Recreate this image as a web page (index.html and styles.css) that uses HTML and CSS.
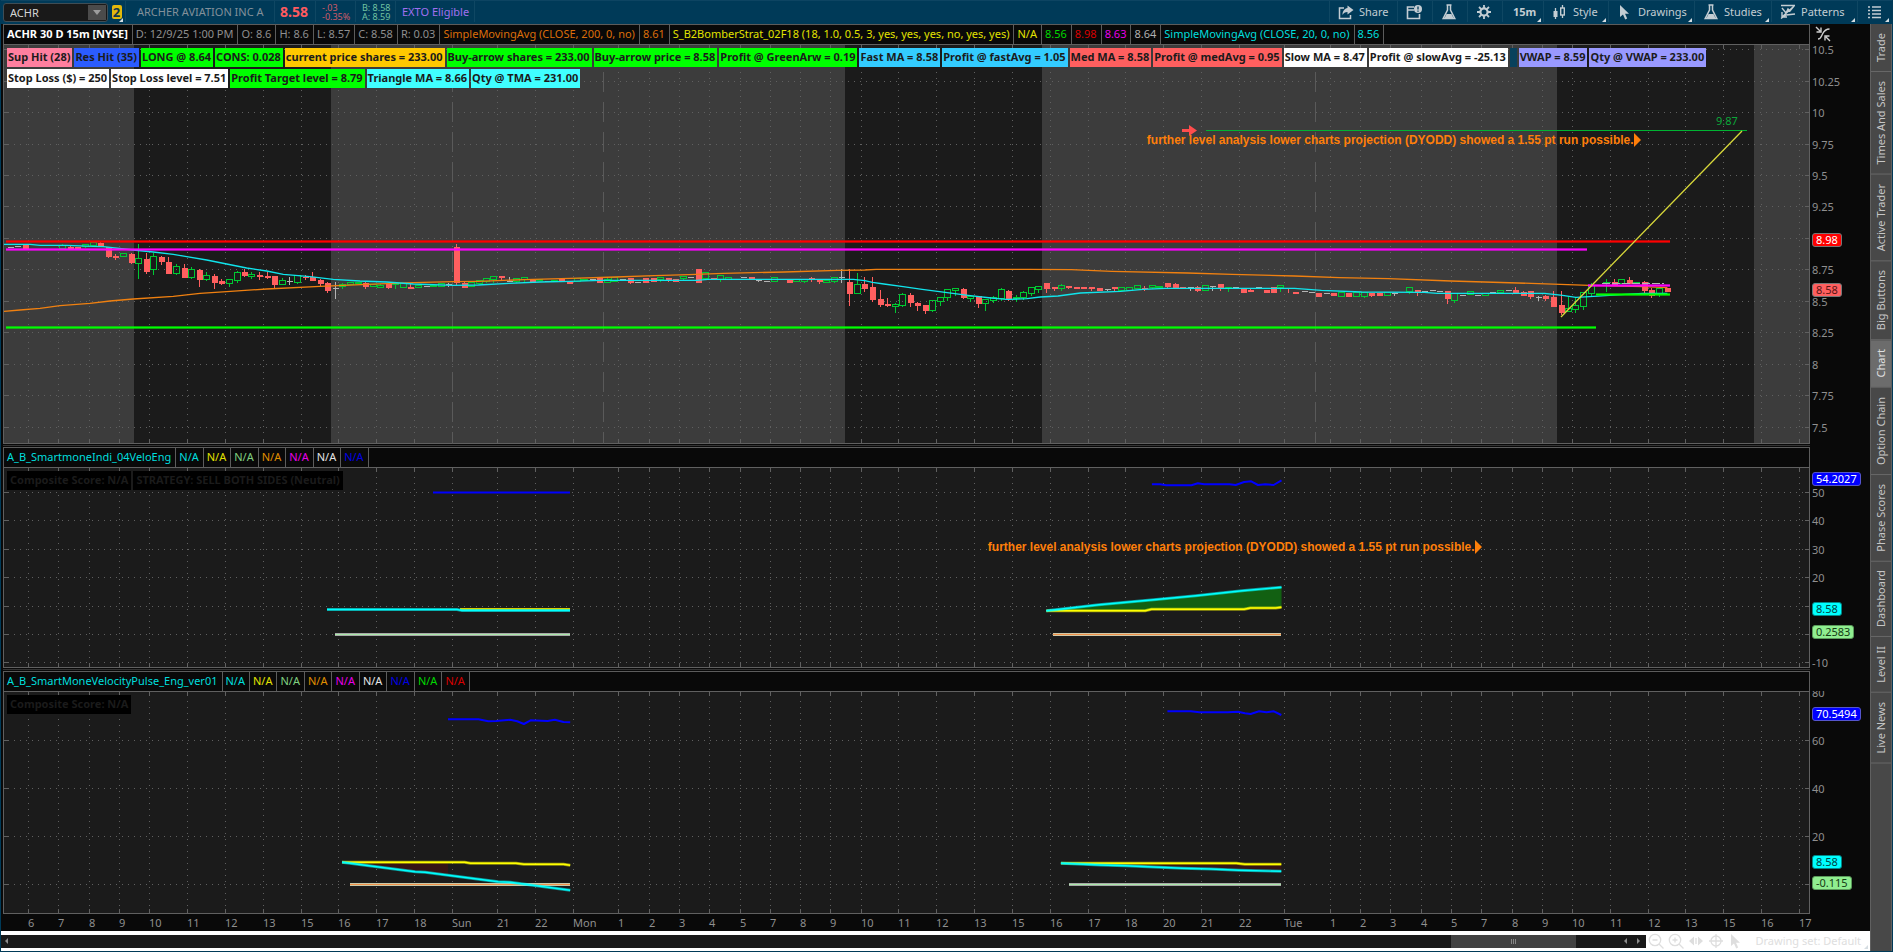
FILE: index.html
```html
<!DOCTYPE html>
<html lang="en">
<head>
<meta charset="utf-8">
<title>ACHR 30 D 15m</title>
<link rel="stylesheet" href="styles.css">
</head>
<body>
<div class="app">
  <header class="toolbar">
    <div class="symbol-box">
      <select class="symbol-select" aria-label="Symbol"><option>ACHR</option></select>
      <span class="symbol-arrow"></span>
    </div>
    <button class="link-badge corner" aria-label="Link group 2"><span>2</span></button>
    <div class="cell company">ARCHER AVIATION INC A</div>
    <div class="cell last">8.58</div>
    <div class="cell stack down"><span>-.03</span><span>-0.35%</span></div>
    <div class="cell stack quote"><span>B: 8.58</span><span>A: 8.59</span></div>
    <div class="cell exto">EXTO Eligible</div>
    <div class="spacer"></div>
    <button class="tool share"><svg class="icon" viewBox="0 0 16 16"><path d="M6 4H1.500v10.500h11V11" fill="none" stroke="currentColor" stroke-width="1.500"/><path d="M9.500 1.500 15.500 6l-6 4.500V8C7 8 5.500 9 4.500 11c0-4 2-6.500 5-7z" fill="currentColor"/></svg>Share</button>
    <button class="tool slim" aria-label="Calendar"><svg class="icon" viewBox="0 0 16 16"><path d="M8 3H1.500v11.500h12V10M1.500 6H8" fill="none" stroke="currentColor" stroke-width="1.600"/><circle cx="12" cy="5" r="4" fill="currentColor"/><path d="M12 2.500v3M12 6.500v1.200" stroke="#003a58" stroke-width="1.300"/></svg></button>
    <button class="tool slim" aria-label="Edit studies"><svg class="icon" viewBox="0 0 16 16"><use href="#flask"/></svg></button>
    <button class="tool slim" aria-label="Settings"><svg class="icon" viewBox="0 0 16 16"><circle cx="8" cy="8" r="3.600" fill="none" stroke="currentColor" stroke-width="2.200"/><path d="M8 1v3M8 12v3M1 8h3M12 8h3M3 3l2.200 2.200M10.800 10.800 13 13M13 3l-2.200 2.200M5.200 10.800 3 13" stroke="currentColor" stroke-width="1.800"/></svg></button>
    <button class="tool frame corner"><b>15m</b></button>
    <button class="tool style corner"><svg class="icon" viewBox="0 0 16 16"><path d="M3.500 4v11M10.500 1v3M10.500 11v3" stroke="currentColor" stroke-width="1.300"/><rect x="1.500" y="7" width="4" height="6" fill="currentColor"/><rect x="8.700" y="4" width="3.600" height="7" fill="none" stroke="currentColor" stroke-width="1.400"/></svg>Style</button>
    <button class="tool draw corner"><svg class="icon" viewBox="0 0 16 16"><path d="M3 1v12l3-2.500 2.200 5 2-.9-2.200-4.800H12z" fill="currentColor"/></svg>Drawings</button>
    <button class="tool studies corner"><svg class="icon" viewBox="0 0 16 16"><use href="#flask"/></svg>Studies</button>
    <button class="tool patterns corner"><svg class="icon" viewBox="0 0 16 16"><path d="M1 1.500h14M1 14.500 6 11l9-1M2 4l4 5 2-4 2 2 4-5M2 13 13 3M2 8v5h5" fill="none" stroke="currentColor" stroke-width="1.400"/></svg>Patterns</button>
    <button class="tool menu corner" aria-label="Menu"><svg class="icon" viewBox="0 0 16 16"><path d="M2 3h2M6 3h9M2 6.500h2M6 6.500h9M2 10h2M6 10h9M2 13.500h2M6 13.500h9" stroke="currentColor" stroke-width="1.500"/></svg></button>
  </header>

  <svg class="defs" aria-hidden="true"><defs><g id="flask"><path d="M5.500 1h5M6.500 1v5L2.200 14.500h11.600L9.500 6V1" fill="none" stroke="currentColor" stroke-width="1.500"/><path d="M5.500 10h5l2.300 4.500H3.200z" fill="currentColor"/></g></defs></svg>

  <div class="body">
    <main class="workspace">
      <section class="panel price">
        <div class="study-bar">
          <b class="white">ACHR 30 D 15m [NYSE]</b><span>D: 12/9/25 1:00 PM</span><span>O: 8.6</span><span>H: 8.6</span><span>L: 8.57</span><span>C: 8.58</span><span>R: 0.03</span><span class="orange">SimpleMovingAvg (CLOSE, 200, 0, no)</span><span class="orange">8.61</span><span class="yellow">S_B2BomberStrat_02F18 (18, 1.0, 0.5, 3, yes, yes, yes, no, yes, yes)</span><span class="yellow">N/A</span><span class="green">8.56</span><span class="red">8.98</span><span class="magenta">8.63</span><span class="silver">8.64</span><span class="cyan">SimpleMovingAvg (CLOSE, 20, 0, no)</span><span class="cyan">8.56</span>
        </div>
        <button class="collapse" aria-label="Fit chart"><svg class="icon" viewBox="0 0 16 16"><path d="M1 1l4 4M6 1.500V6H1.500M15 15l-4-4M10 14.500V10h4.500M3 13c3 0 3-2 4.500-5S11 3 14.500 3" fill="none" stroke="currentColor" stroke-width="1.400"/></svg></button>
        <div class="plot" id="plot-price">
          <div class="chips">
            <div class="chip-row"><span class="chip pink">Sup Hit (28)</span><span class="chip blue">Res Hit (35)</span><span class="chip lime">LONG @ 8.64</span><span class="chip lime">CONS: 0.028</span><span class="chip gold">current price shares = 233.00</span><span class="chip lime">Buy-arrow shares = 233.00</span><span class="chip lime">Buy-arrow price = 8.58</span><span class="chip lime">Profit @ GreenArw = 0.19</span><span class="chip sky">Fast MA = 8.58</span><span class="chip sky">Profit @ fastAvg = 1.05</span><span class="chip coral">Med MA = 8.58</span><span class="chip coral">Profit @ medAvg = 0.95</span><span class="chip plain">Slow MA = 8.47</span><span class="chip plain">Profit @ slowAvg = -25.13</span><span class="chip empty"></span><span class="chip violet">VWAP = 8.59</span><span class="chip violet">Qty @ VWAP = 233.00</span></div>
            <div class="chip-row"><span class="chip plain">Stop Loss ($) = 250</span><span class="chip plain">Stop Loss level = 7.51</span><span class="chip lime">Profit Target level = 8.79</span><span class="chip aqua">Triangle MA = 8.66</span><span class="chip aqua">Qty @ TMA = 231.00</span></div>
          </div>
          <span class="note note-top">further level analysis lower charts projection (DYODD) showed a 1.55 pt run possible.</span>
          <span class="target">9.87</span>
        </div>
        <div class="axis" id="axis-price"></div>
      </section>

      <section class="panel velo">
        <div class="study-bar"><span class="cyan">A_B_SmartmoneIndi_04VeloEng</span><span class="cyan">N/A</span><span class="yellow">N/A</span><span class="mint">N/A</span><span class="amber">N/A</span><span class="magenta">N/A</span><span class="light">N/A</span><span class="navy">N/A</span></div>
        <div class="plot" id="plot-velo">
          <div class="chips"><div class="chip-row"><span class="chip dark">Composite Score: N/A</span><span class="chip dark">STRATEGY: SELL BOTH SIDES (Neutral)</span></div></div>
          <span class="note note-mid">further level analysis lower charts projection (DYODD) showed a 1.55 pt run possible.</span>
        </div>
        <div class="axis" id="axis-velo"></div>
      </section>

      <section class="panel pulse">
        <div class="study-bar"><span class="cyan">A_B_SmartMoneVelocityPulse_Eng_ver01</span><span class="cyan">N/A</span><span class="yellow">N/A</span><span class="mint">N/A</span><span class="amber">N/A</span><span class="magenta">N/A</span><span class="light">N/A</span><span class="navy">N/A</span><span class="green">N/A</span><span class="red">N/A</span></div>
        <div class="plot" id="plot-pulse">
          <div class="chips"><div class="chip-row"><span class="chip dark">Composite Score: N/A</span></div></div>
        </div>
        <div class="axis" id="axis-pulse"></div>
      </section>

      <div class="time-axis" id="time-axis"></div>

      <footer class="bottom">
        <div class="scroller">
          <button class="arrow left" aria-label="Scroll to start"></button>
          <div class="track"><div class="thumb"><i></i><i></i><i></i></div></div>
          <button class="arrow left" aria-label="Scroll left"></button>
          <button class="arrow right" aria-label="Scroll right"></button>
        </div>
        <button class="mini" aria-label="Zoom out"><svg class="icon" viewBox="0 0 16 16"><circle cx="7" cy="7" r="5.700"/><path d="M11 11l4.500 4.500M4.500 7h5"/></svg></button>
        <button class="mini" aria-label="Zoom in"><svg class="icon" viewBox="0 0 16 16"><circle cx="7" cy="7" r="5.700"/><path d="M11 11l4.500 4.500M4.500 7h5M7 4.500v5"/></svg></button>
        <button class="mini" aria-label="Pan"><svg class="icon" viewBox="0 0 16 16"><path d="M6 3.500v9L1 8zM10 3.500v9L15 8z" class="solid"/><path d="M8 5v6"/></svg></button>
        <button class="mini" aria-label="Crosshair"><svg class="icon" viewBox="0 0 16 16"><circle cx="8" cy="8" r="5"/><path d="M8 1v14M1 8h14"/></svg></button>
        <button class="mini" aria-label="Pointer"><svg class="icon" viewBox="0 0 16 16"><path d="M3 1v12l3-2.500 2.200 5 2-.9-2.200-4.800H12z" class="solid"/></svg></button>
        <button class="drawing-set corner">Drawing set: Default</button>
      </footer>
    </main>

    <nav class="side">
      <button>Trade</button><button>Times And Sales</button><button>Active Trader</button><button>Big Buttons</button><button class="active">Chart</button><button>Option Chain</button><button>Phase Scores</button><button>Dashboard</button><button>Level II</button><button>Live News</button>
    </nav>
  </div>
</div>
<script src="chart.js"></script>
</body>
</html>
```

FILE: styles.css
```css
* { box-sizing: border-box; }
body {
  margin: 0;
  background: #003a58;
  font-family: "Noto Sans", "Open Sans", sans-serif;
  font-size: 11px;
  line-height: 16px;
  color: #8f8f8f;
}
button {
  border: 0;
  padding: 0;
  margin: 0;
  background: none;
  color: inherit;
  font: inherit;
  white-space: nowrap;
}
.app {
  display: flex;
  flex-direction: column;
  height: 100vh;
  padding: 0 1px 1px;
  overflow: hidden;
}
.defs { position: absolute; width: 0; height: 0; }
.icon { width: 16px; height: 16px; flex: none; }

.toolbar {
  display: flex;
  align-items: stretch;
  height: 24px;
  flex: none;
  padding: 0 1px 2px 2px;
  border-top: 1px solid #0d4462;
  color: #c3cdd3;
}
.symbol-box {
  position: relative;
  width: 105px;
  height: 19px;
  margin-top: 2px;
}
.symbol-select {
  width: 100%;
  height: 100%;
  padding: 0 6px;
  border: 1px solid #3f4d55;
  border-radius: 3px;
  background: #191919;
  color: #d5d5d5;
  font: inherit;
  appearance: none;
}
.symbol-arrow {
  position: absolute;
  top: 2px;
  right: 2px;
  width: 18px;
  height: 15px;
  background: #4b4b4b;
  pointer-events: none;
}
.symbol-arrow::after {
  content: "";
  position: absolute;
  left: 5px;
  top: 5px;
  border: 4px solid transparent;
  border-top: 5px solid #9d9d9d;
}
.link-badge { width: 17px; }
.link-badge span {
  display: block;
  width: 10px;
  height: 14px;
  margin: 0 auto;
  border-radius: 2px;
  background: #e3b80b;
  color: #10364c;
  font-weight: bold;
  font-size: 13px;
  line-height: 14px;
}
.corner { position: relative; }
.corner::after {
  content: "";
  position: absolute;
  right: 2px;
  bottom: 0;
  border-left: 4px solid transparent;
  border-bottom: 4px solid #d5dde2;
}
.cell {
  display: flex;
  align-items: center;
  border-left: 1px solid #0f4763;
  white-space: nowrap;
}
.company { width: 149px; padding-left: 11px; color: #82909a; }
.last { width: 41px; padding-left: 5px; color: #ff5a5f; font-weight: bold; font-size: 14px; }
.stack { flex-direction: column; align-items: flex-start; justify-content: center; font-size: 9px; line-height: 9px; }
.down { width: 40px; padding-left: 6px; color: #cf5a68; }
.quote { width: 40px; padding-left: 6px; color: #72c3a2; }
.exto { width: 80px; padding-left: 6px; color: #a070f0; border-right: 1px solid #0f4763; }
.spacer { flex: 1; }
.tool {
  display: flex;
  align-items: center;
  gap: 5px;
  border-left: 1px solid #0f4763;
  padding-left: 8px;
}
.share { width: 68px; }
.slim { width: 35px; }
.frame { width: 41px; padding-left: 10px; }
.style { width: 65px; }
.draw { width: 86px; }
.studies { width: 77px; }
.patterns { width: 86px; }
.menu { width: 34px; }

.body { display: flex; flex: 1; min-height: 0; }
.workspace {
  display: flex;
  flex-direction: column;
  flex: 1;
  min-width: 0;
  background: #090909;
}
.panel {
  display: grid;
  grid-template-columns: minmax(0, 1fr) 60px;
  grid-template-rows: 20px minmax(0, 1fr);
  padding-left: 2px;
  margin-bottom: 3px;
  min-height: 0;
}
.price { flex: 420 1 0; }
.velo { flex: 221 1 0; }
.pulse { flex: 243 1 0; margin-bottom: 0; }
.velo .study-bar, .pulse .study-bar { grid-column: 1; }
.velo, .pulse { position: relative; }
.velo::before, .pulse::before {
  content: "";
  position: absolute;
  left: 2px;
  right: 60px;
  top: -2px;
  height: 1px;
  background: #333;
}
.study-bar {
  display: flex;
  border: 1px solid #5c5c5c;
  border-bottom: 0;
  white-space: nowrap;
  overflow: hidden;
  line-height: 18px;
}
.study-bar > * { padding: 0 4px 0 3px; border-right: 1px solid #5c5c5c; }
.collapse { justify-self: start; padding: 2px 0 0 5px; color: #d0d0d0; }
.white { color: #fff; }
.orange { color: #dc6e0a; }
.yellow { color: #e2e200; }
.green { color: #00d800; }
.red { color: #d80000; }
.magenta { color: #e800e8; }
.silver { color: #b0b0b0; }
.cyan { color: #00dede; }
.mint { color: #80d080; }
.amber { color: #e09000; }
.light { color: #e4e4e4; }
.navy { color: #0000e4; }

.plot { grid-column: 1; position: relative; min-height: 0; background: #1b1b1b; }
.plot svg { display: block; position: absolute; width: 100%; height: 100%; }
.axis { grid-column: 2; position: relative; overflow: hidden; }
.axis span { position: absolute; left: 2px; transform: translateY(-50%); line-height: 10px; }
.axis .tag {
  padding: 0 3px;
  border: 1px solid #777;
  border-radius: 3px;
  line-height: 12px;
}
.tag.red-tag { background: #f00; color: #fff; }
.tag.coral-tag { background: #ff5f5f; color: #5a1515; }
.tag.blue-tag { background: #00f; color: #fff; border-color: #55c; }
.tag.cyan-tag { background: #0ff; color: #044; border-color: #088; }
.tag.mint-tag { background: #90ee90; color: #143c14; border-color: #5a9a5a; }

.chips { position: absolute; z-index: 1; left: 4px; top: 4px; display: flex; flex-direction: column; gap: 2px; }
.chip-row { display: flex; gap: 2px; }
.chip {
  height: 19px;
  padding: 0 2px 0 1px;
  color: #1b1b1b;
  font-weight: bold;
  line-height: 18px;
  white-space: nowrap;
}
.pink { background: #ff7f9f; }
.blue { background: #2b5cff; }
.lime { background: #0f0; }
.gold { background: #ffc800; }
.sky { background: #33ccff; }
.coral { background: #ff5f5f; }
.plain { background: #fff; }
.violet { background: #9999ff; }
.aqua { background: #40ffff; }
.dark { background: #000; padding: 0 3px; }
.empty { width: 7px; padding: 0; background: #08415c; }

.note {
  position: absolute;
  z-index: 1;
  color: #ff7f0a;
  font: bold 12px/16px "Liberation Sans", Arial, sans-serif;
  white-space: nowrap;
}
.note::after {
  content: "";
  display: inline-block;
  vertical-align: -3px;
  border: 7px solid transparent;
  border-left-color: #ff7f0a;
  border-right: 0;
}
.note-top { left: 63.3%; top: 22%; }
.note-mid { left: 54.5%; top: 36%; }
.target { position: absolute; left: 94.8%; top: 17.2%; color: #0ba83a; }

.time-axis { position: relative; height: 17px; margin: 0 60px 0 2px; flex: none; }
.time-axis span { position: absolute; top: 1px; }

.bottom {
  display: flex;
  align-items: center;
  height: 20px;
  flex: none;
  background: #fff;
  color: #dedede;
}
.scroller {
  display: flex;
  align-items: center;
  flex: 1;
  height: 13px;
  background: #191919;
}
.track { flex: 1; display: flex; justify-content: flex-end; height: 100%; padding-right: 44px; }
.thumb { display: flex; justify-content: center; align-items: center; gap: 1px; width: 8%; background: #424242; }
.thumb i { width: 1px; height: 5px; background: #888; }
.arrow { width: 13px; height: 13px; }
.arrow::after { content: ""; display: block; width: 0; margin-left: 4px; border: 3px solid transparent; }
.arrow.left::after { border-right-color: #8d8d8d; border-left: 0; }
.arrow.right::after { border-left-color: #8d8d8d; border-right: 0; }
.mini { display: flex; width: 20px; padding-left: 2px; }
.mini .icon { fill: none; stroke: currentColor; stroke-width: 1.3; }
.mini .solid { fill: currentColor; stroke: none; }
.drawing-set { margin-left: 10px; padding-right: 9px; }

.side {
  display: flex;
  flex-direction: column;
  width: 22px;
  flex: none;
  background: #484848;
  border: 1px solid #606060;
  border-width: 0 1px;
  color: #c6c6c6;
}
.side button {
  writing-mode: vertical-rl;
  transform: rotate(180deg);
  padding: 9px 1px;
  border-top: 1px solid #686868;
  line-height: 18px;
}
.side .active { background: #6c6c6c; color: #e0e0e0; }
```

FILE: chart.js
```js
const NS = "http://www.w3.org/2000/svg";
const LEFT = 3, WIDTH = 1807;
const GREY = "#606060";

const times = [
  [28, "6"], [58, "7"], [89, "8"], [119, "9"], [149, "10"], [187, "11"], [225, "12"], [263, "13"],
  [301, "15"], [338, "16"], [376, "17"], [414, "18"], [452, "Sun"], [497, "21"], [535, "22"], [573, "Mon"],
  [618, "1"], [649, "2"], [679, "3"], [709, "4"], [740, "5"], [770, "7"], [800, "8"], [830, "9"],
  [861, "10"], [898, "11"], [936, "12"], [974, "13"], [1012, "15"], [1050, "16"], [1088, "17"], [1125, "18"],
  [1163, "20"], [1201, "21"], [1239, "22"], [1284, "Tue"], [1330, "1"], [1360, "2"], [1390, "3"], [1421, "4"],
  [1451, "5"], [1481, "7"], [1512, "8"], [1542, "9"], [1572, "10"], [1610, "11"], [1648, "12"], [1685, "13"],
  [1723, "15"], [1761, "16"], [1799, "17"]
];

function add(parent, name, attrs) {
  const el = document.createElementNS(NS, name);
  for (const key in attrs) el.setAttribute(key, attrs[key]);
  parent.appendChild(el);
  return el;
}

function line(svg, x1, y1, x2, y2, stroke, width = 1, extra = {}) {
  return add(svg, "line", { x1, y1, x2, y2, stroke, "stroke-width": width, ...extra });
}

// Points are stored in fine units: x is divided by ux and y by 3, from (x0, y0).
function points(x0, ux, y0, data) {
  return data.map(([x, y]) => [x0 + x / ux, y0 + y / 3]);
}

function path(svg, pts, stroke, width, opacity = 1) {
  return add(svg, "polyline", {
    points: pts.map(p => p.map(v => v.toFixed(1)).join(",")).join(" "),
    fill: "none", stroke, "stroke-width": width, "stroke-linejoin": "round", "stroke-opacity": opacity
  });
}

function glowPath(svg, pts, stroke) {
  path(svg, pts, stroke, 3, .55);
  path(svg, pts, stroke, 1.4);
}

function area(svg, upper, lower, fill) {
  add(svg, "polygon", { points: upper.concat(lower.slice().reverse()).map(p => p.join(",")).join(" "), fill });
}

function makePlot(id, top, height, rows) {
  const svg = add(document.getElementById(id), "svg", {
    viewBox: `${LEFT} ${top} ${WIDTH} ${height}`, preserveAspectRatio: "none"
  });
  svg.rows = rows; svg.top0 = top; svg.h0 = height;
  return svg;
}

function grid(svg) {
  const bottom = svg.top0 + svg.h0, right = LEFT + WIDTH;
  for (const y of svg.rows) {
    line(svg, LEFT + 5, y + .5, right - 5, y + .5, GREY, 1, { "stroke-dasharray": "1 5" });
    line(svg, LEFT, y + .5, LEFT + 5, y + .5, GREY);
    line(svg, right - 5, y + .5, right, y + .5, GREY);
  }
  for (const [x] of times) {
    line(svg, x + .5, svg.top0 + 10, x + .5, bottom - 6, GREY, 1, { "stroke-dasharray": "1 5" });
    line(svg, x + .5, svg.top0, x + .5, svg.top0 + 5, GREY);
    line(svg, x + .5, bottom - 5, x + .5, bottom, GREY);
  }
  add(svg, "rect", { x: LEFT + .5, y: svg.top0 + .5, width: WIDTH - 1, height: svg.h0 - 1, fill: "none", stroke: GREY });
}

function labels(id, top, height, items) {
  const axis = document.getElementById(id);
  for (const [y, text, tag] of items) {
    const span = document.createElement("span");
    span.textContent = text;
    if (tag) span.className = `tag ${tag}-tag`;
    span.style.top = `${(y - top) / height * 100}%`;
    axis.appendChild(span);
  }
}

// Bars: x, body top, body bottom, colour, high, low.
const barSets = [
  { x0: 0, ux: 3, bars: [
    [30,82,82,"w"],[52,77,77,"w"],[75,75,88,"r"],[97,86,86,"w"],[120,86,86,"w"],[165,86,86,"w"],[187,77,86,"g",73,88],
    [210,80,88,"r",75],[233,80,88,"r"],[256,75,82,"g",72,85],[279,70,77,"g"],[301,69,79,"r",66],
    [324,82,110,"r",82,113],[346,108,113,"r",103,119],[370,103,112,"g",99],[393,102,129,"r",99,132],
    [415,118,131,"g",72,177],[438,117,156,"r",99,162],[460,111,149,"g",99,165],[483,111,125,"r",107,135],
    [505,126,161,"r",111],[529,142,161,"g",132,165],[552,144,173,"r",132],[574,151,173,"g",141,177],
    [597,150,180,"r",147,201],[620,168,179,"g",156,183],[643,168,188,"r",162,207],[664,183,191,"r",177,194],
    [688,181,191,"g",177,201],[711,160,182,"g",153,188],[733,156,167,"r",147,170],[754,166,170,"g",156,177],
    [778,165,171,"r",156,180],[802,168,173,"r",156,177],[823,168,195,"r",168,205],[847,184,194,"g",174,196],
    [868,184,184,"w",171,195],[892,169,188,"g",165,191],[915,170,173,"r",165,180],[937,172,182,"r",156],
    [960,180,191,"r",177,198],[982,189,212,"r",186,219],[1006,205,205,"w",186,237],[1027,195,200,"g",189,206],
    [1050,190,194,"g"],[1075,190,193,"g"],[1097,190,201,"r",187,207],[1119,194,200,"g"],[1141,198,203,"g",191],
    [1164,191,203,"r",189,206],[1187,192,196,"g",192,206],[1209,191,203,"g"],[1232,201,206,"r",192],
    [1255,198,203,"g"],[1278,199,199,"w"],[1300,198,202,"g",194],[1323,191,200,"g"],[1346,191,191,"w",190,201],
    [1369,81,190,"r",72,194],[1392,189,203,"r",185],[1414,189,202,"g",185]] },
  { x0: 440, ux: 2.613, bars: [
    [102,184,191,"g"],[122,178,186,"g",178,190],[141,171,180,"g",171,190],[160,168,173,"r",168,180],
    [181,184,184,"w",171],[201,178,185,"g",178,190],[221,175,179,"g",175,190],[241,179,190,"r"],[261,180,184,"g"],
    [281,183,183,"w"],[299,182,187,"g"],[318,178,186,"r"],[338,184,192,"r"],[358,178,185,"g"],[378,179,184,"g"],
    [398,176,176,"w"],[418,172,189,"r"],[438,181,189,"g",172],[457,174,185,"g"],[477,176,176,"w"],
    [498,174,189,"r",174,192],[517,187,187,"w"],[537,174,189,"r"],[557,174,186,"r"],[576,175,180,"g",175,186],
    [596,174,180,"r",174,186],[616,178,186,"r"],[635,171,177,"g",171,180],[655,172,172,"w"],[675,147,189,"r"],
    [695,160,177,"g",160,181],[714,174,178,"r"],[734,168,179,"g",168,186],[754,175,179,"g"],[774,176,176,"w"],
    [794,172,172,"w"],[814,171,178,"r"],[833,180,180,"w",180,186],[852,184,184,"w"],[873,175,186,"g"],
    [892,176,176,"w"],[912,179,189,"r"],[932,179,185,"g"],[952,180,185,"g",180,189],[971,174,179,"r",171,186],
    [991,179,186,"r",179,192],[1011,183,188,"g"],[1030,175,185,"g",175,189],[1050,172,172,"w",147,189],
    [1070,186,222,"r",147,258],[1091,196,221,"g",159],[1110,192,207,"r",171,216],[1130,201,240,"r",171,246],
    [1150,237,255,"r",210,261],[1169,252,258,"r",234,261],[1189,255,261,"g",249,279],[1209,226,258,"g",219,261],
    [1229,225,249,"r",219,261],[1248,249,258,"r",246,273],[1268,255,273,"r",255,282],[1288,244,272,"g",244,276],
    [1308,235,245,"g",231,258],[1327,211,233,"g",211,243],[1347,207,212,"g",204,228],[1368,207,234,"r",204,237],
    [1387,230,236,"g",225,246],[1407,229,251,"r",229,264],[1426,241,251,"g",241,273],[1446,234,242,"g",228,249],
    [1466,211,236,"g",204,243]] },
  { x0: 1000, ux: 2.24, bars: [
    [19,213,237,"r",210,243],[36,233,238,"g",225,246],[53,220,234,"g",213,240],[70,205,221,"g",201,228],
    [87,202,209,"g",198,219],[104,189,207,"r",189,219],[121,202,207,"r",202,213],[138,199,206,"g",192,213],
    [154,198,204,"r",198,207],[171,201,207,"r"],[188,201,207,"r"],[204,201,207,"r",201,213],[223,204,213,"r"],
    [240,206,206,"w",206,213],[256,201,207,"r",201,213],[273,205,213,"g"],[290,205,213,"g"],[308,198,207,"g"],
    [324,204,208,"r",198,213],[341,199,205,"g",199,207],[358,200,204,"g"],[375,189,202,"r",189,207],
    [392,192,205,"r",189],[409,201,206,"r"],[426,202,202,"w",202,213],[442,201,213,"r",198,216],[460,198,212,"g"],
    [477,199,199,"w",199,213],[494,192,206,"r",192,213],[511,203,207,"g",203,216],[527,202,202,"w"],
    [545,204,219,"r"],[562,210,216,"r",207],[579,202,202,"w"],[596,210,219,"r"],[613,201,219,"r"],
    [629,199,205,"g",195,216],[646,205,208,"r",205,219],[663,216,222,"r"],[681,214,214,"w"],[697,217,217,"w"],
    [714,219,231,"r"],[731,220,220,"w"],[748,219,228,"r"],[765,220,230,"g"],[781,219,231,"r"],[798,220,230,"g"],
    [816,220,230,"g",220,234],[832,219,228,"r",219,231],[849,219,228,"r"],[867,220,227,"g"],[884,219,219,"w",219,228],
    [917,205,217,"g",205,222],[935,210,219,"r",210,228],[951,214,214,"w"],[968,211,211,"w"],[985,214,214,"w"],
    [1002,213,237,"r",213,252],[1019,222,243,"g",222,249],[1036,226,226,"w"],[1053,217,226,"g"],[1070,226,226,"w"],
    [1087,221,227,"g"],[1104,217,217,"w"],[1121,214,218,"g"],[1138,211,211,"w"],[1155,210,219,"r",201],
    [1172,216,227,"r",213],[1189,213,231,"r",213,237],[1206,232,232,"w",228,243],[1222,228,237,"r",225,243],
    [1240,231,261,"r",213],[1257,255,279,"r",213,285],[1273,267,275,"g",231],[1290,259,269,"g",231,279],
    [1307,220,261,"g",218,270],[1325,198,222,"g",189,228]] },
  { x0: 1600, ux: 3, bars: [
    [20,188,191,"g",177,216],[42,185,194,"r",177],[65,181,191,"g"],[88,180,193,"r",171],[110,188,192,"g",186],
    [133,187,213,"r",183,219],[155,210,228,"r",204,234],[178,208,226,"g",202,231],[201,203,216,"r"]] }
];

function drawBars(svg) {
  const colours = { r: "#ff5f5f", g: "#00c832", w: "#b4b4b4" };
  for (const set of barSets) {
    for (const [x, top, bottom, type, high = top, low = bottom] of set.bars) {
      const px = Math.floor(set.x0 + x / set.ux), c = colours[type];
      const y = v => Math.round(220 + v / 3);
      if (type === "w") {
        if (high !== low) line(svg, px + .5, y(high), px + .5, y(low), c);
        line(svg, px - 2, y(top) + .5, px + 4, y(top) + .5, c);
      } else if (type === "r") {
        if (high !== low) line(svg, px + .5, y(high), px + .5, y(low), c);
        add(svg, "rect", { x: px - 2, y: y(top), width: 6, height: Math.max(1, y(bottom) - y(top)), fill: c });
      } else {
        line(svg, px + .5, y(high), px + .5, y(top), c);
        line(svg, px + .5, y(bottom), px + .5, y(low), c);
        add(svg, "rect", { x: px - 2.5, y: y(top) - .5, width: 6, height: Math.max(1, y(bottom) - y(top)), fill: "none", stroke: c });
      }
    }
  }
}

function glowLine(svg, x1, x2, y, colour) {
  line(svg, x1, y, x2, y, colour, 3, { "stroke-opacity": .62 });
  line(svg, x1, y, x2, y, colour, 1);
}

// Price chart
const price = makePlot("plot-price", 44, 400, [49, 81, 112, 144, 175, 206, 238, 269, 301, 332, 364, 395, 427]);
for (const [a, b] of [[3, 134], [331, 845], [1042, 1557], [1754, 1810]]) {
  add(price, "rect", { x: a, y: 44, width: b - a, height: 400, fill: "#3c3c3c" });
}
grid(price);
for (const x of [452.5, 603.5, 1315.5]) line(price, x, 72, x, 444, "#5a5a5a", 1, { "stroke-dasharray": "20 10" });
drawBars(price);
path(price, points(0, 3, 220, [[12,274],[60,270],[120,265],[180,257],[270,250],[330,243],[400,237],[520,229],[600,220],[680,215],[800,207],[960,199],[1100,193],[1240,188],[1360,185]])
  .concat(points(440, 2.613, 220, [[100,184],[220,179],[340,175],[460,171],[560,167],[650,164],[740,160],[900,156],[1040,151],[1110,150],[1140,148],[1540,148]]),
    points(1000, 2.24, 220, [[160,149],[250,154],[420,159],[520,163],[660,168],[760,173],[870,176],[1010,183],[1160,189],[1320,196],[1440,200],[1495,203]])), "#f08010", 1.3);
path(price, points(0, 3, 220, [[12,73],[90,73],[120,76],[200,76],[280,79],[310,80],[400,90],[460,96],[520,103],[560,110],[620,120],[680,132],[740,144],[800,153],[850,163],[930,170],[1000,178],[1080,183],[1160,186],[1240,192],[1360,196]])
  .concat(points(440, 2.613, 220, [[100,195],[180,190],[260,186],[340,184],[420,181],[670,181],[700,178],[1080,178],[1110,182],[1130,187],[1160,192],[1210,200],[1260,208],[1320,217],[1380,226],[1440,234],[1480,238]]),
    points(1000, 2.24, 220, [[20,238],[60,236],[90,231],[130,228],[180,219],[270,214],[320,208],[370,205],[660,205],[720,211],[810,216],[950,217],[980,220],[1220,220],[1260,226],[1290,232],[1330,229],[1400,223],[1440,220],[1495,220]])), "#10e4ec", 1.3);
glowLine(price, 6, 1670, 241.5, "#f00");
glowLine(price, 6, 1587, 249.5, "#f0f");
glowLine(price, 6, 1596, 327.5, "#0f0");
glowLine(price, 1588, 1670, 285.5, "#f0f");
glowLine(price, 1596, 1670, 294.5, "#0f0");
line(price, 1602, 283.5, 1664, 283.5, "#b4b4b4", 1, { "stroke-dasharray": "8 2" });
line(price, 1206, 130.5, 1747, 130.5, "#00b432");
line(price, 1561, 317, 1742, 131, "#d8d83a", 1.3);
add(price, "path", { d: "M1182 129h7v-4l8 5.500-8 5.500v-4h-7z", fill: "#ff4d4d" });

labels("axis-price", 44, 400, [[50, "10.5"], [82, "10.25"], [113, "10"], [145, "9.75"], [176, "9.5"], [207, "9.25"],
  [270, "8.75"], [302, "8.5"], [333, "8.25"], [365, "8"], [396, "7.75"], [428, "7.5"],
  [240, "8.98", "red"], [290, "8.58", "coral"]]);

// Smart money indicator
const velo = makePlot("plot-velo", 467, 201, [492, 520, 549, 577, 606, 634, 662]);
grid(velo);
line(velo, 433, 492.5, 570, 492.5, "#00f", 2);
line(velo, 460, 609, 570, 609, "#d8d000", 2);
glowPath(velo, [[327, 609.5], [457, 609.5], [462, 610.5], [570, 610.5]], "#00ffff");
line(velo, 335, 634.5, 570, 634.5, "#a8a8a8", 3);
line(velo, 335, 634.5, 570, 634.5, "#a8e8a8", 1);
const veloUp = points(960, 2.376, 450, [[205,482],[330,464],[460,449],[560,437],[670,422],[764,412]]);
const veloBase = points(960, 2.376, 450, [[205,482],[440,482],[455,478],[675,478],[690,474],[750,474],[764,472]]);
area(velo, veloUp, veloBase, "#126012");
glowPath(velo, veloBase, "#ffff00");
glowPath(velo, veloUp, "#00ffff");
path(velo, points(960, 2.376, 450, [[456,103],[475,103],[490,106],[550,106],[565,100],[580,103],[640,103],[655,105],[675,96],[692,94],[708,105],[725,103],[745,105],[764,91]]), "#00f", 2);
line(velo, 1053, 634.5, 1281, 634.5, "#d0c8a8", 3);
line(velo, 1053, 634.5, 1281, 634.5, "#f09048", 1);
labels("axis-velo", 467, 201, [[493, "50"], [521, "40"], [550, "30"], [578, "20"], [663, "-10"],
  [479, "54.2027", "blue"], [609, "8.58", "cyan"], [632, "0.2583", "mint"]]);

// Velocity pulse
const pulse = makePlot("plot-pulse", 691, 223, [740, 788, 836, 884]);
grid(pulse);
const pulseTop = points(0, 2.529, 670, [[865,577],[1175,577],[1190,580],[1305,580],[1325,583],[1425,583],[1442,586]]);
const pulseLow = points(0, 2.529, 670, [[865,577],[1050,605],[1075,607],[1260,635],[1290,637],[1442,661]]);
area(pulse, points(0, 2.529, 670, [[865,577],[1133,577]]), points(0, 2.529, 670, [[865,577],[1050,605],[1133,615]]), "#361414");
line(pulse, 350, 884.5, 570, 884.5, "#c8c8a8", 3);
line(pulse, 350, 884.5, 570, 884.5, "#f09048", 1);
glowPath(pulse, pulseTop, "#ffff00");
glowPath(pulse, pulseLow, "#00ffff");
path(pulse, points(0, 2.529, 670, [[1133,148],[1210,148],[1235,154],[1255,153],[1290,149],[1308,154],[1325,162],[1342,151],[1385,153],[1403,149],[1425,156],[1442,157]]), "#00f", 2);
const pulseTop2 = points(1000, 1.756, 670, [[107,580],[415,580],[430,583],[494,583]]);
const pulseLow2 = points(1000, 1.756, 670, [[107,580],[175,585],[220,587],[320,595],[370,597],[420,601],[494,604]]);
area(pulse, pulseTop2, pulseLow2, "#361414");
glowPath(pulse, pulseTop2, "#ffff00");
glowPath(pulse, pulseLow2, "#00ffff");
path(pulse, points(1000, 1.756, 670, [[294,124],[335,124],[350,127],[400,127],[418,125],[430,130],[440,132],[455,124],[468,127],[481,124],[494,135]]), "#00f", 2);
line(pulse, 1069, 884.5, 1281, 884.5, "#a8a8a8", 3);
line(pulse, 1069, 884.5, 1281, 884.5, "#a8e8a8", 1);
labels("axis-pulse", 691, 223, [[693, "80"], [741, "60"], [789, "40"], [837, "20"],
  [714, "70.5494", "blue"], [862, "8.58", "cyan"], [883, "-0.115", "mint"]]);

const timeAxis = document.getElementById("time-axis");
for (const [x, text] of times) {
  const span = document.createElement("span");
  span.textContent = text;
  span.style.left = `${(x - LEFT) / WIDTH * 100}%`;
  timeAxis.appendChild(span);
}
```
